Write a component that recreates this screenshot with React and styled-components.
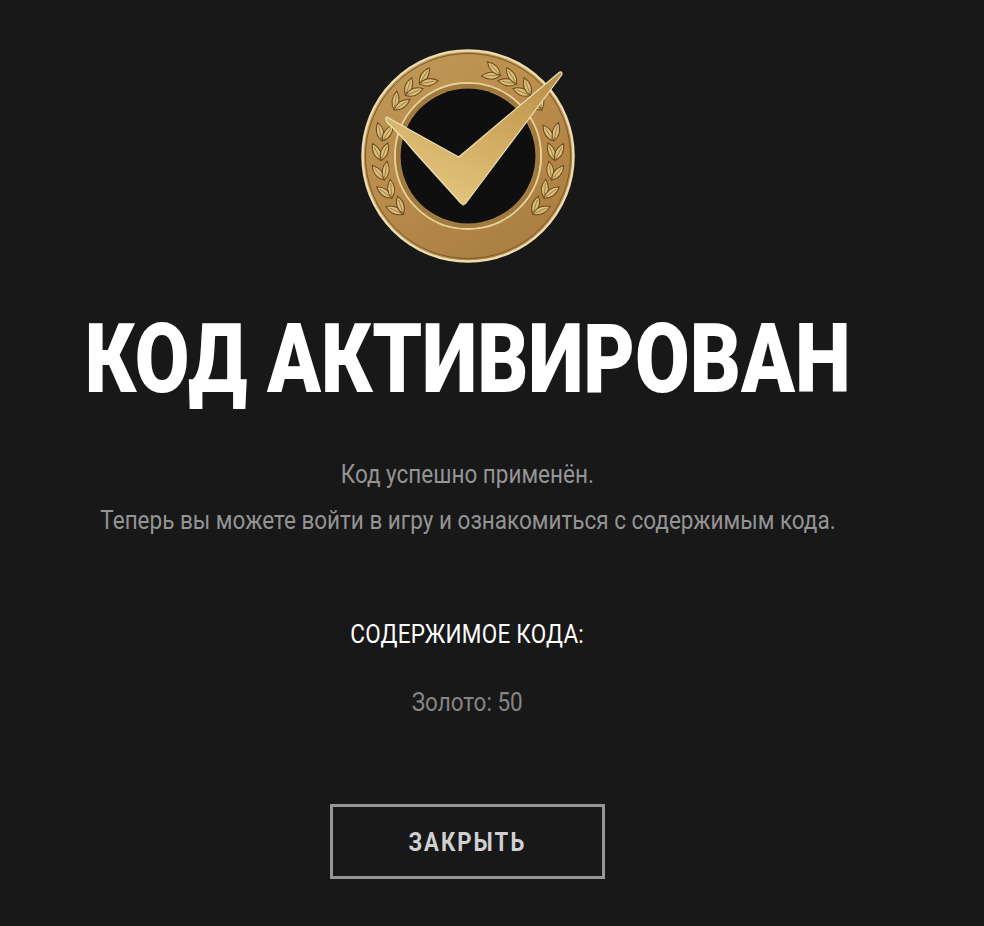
import React from "react";
import styled, { createGlobalStyle } from "styled-components";

const GlobalStyle = createGlobalStyle`
  html, body {
    margin: 0;
    background: #181818;
  }
  body {
    font-family: "Roboto", "Liberation Sans", sans-serif;
  }
`;

const Page = styled.div`
  width: 935px;
  height: 926px;
  display: flex;
  flex-direction: column;
  align-items: center;
  overflow: hidden;
`;

const Emblem = styled.svg`
  display: block;
  width: 250px;
  height: 240px;
  margin-top: 40px;
  flex: none;
`;

const Title = styled.h1`
  margin: 23px 0 0;
  font-size: 96px;
  line-height: 112px;
  font-weight: 900;
  color: #fff;
  white-space: nowrap;
  transform: scaleX(0.826);
`;

const Text = styled.p`
  margin: ${(p) => p.$top}px 0 0;
  font-size: 26px;
  line-height: 30px;
  color: ${(p) => p.$color || "#949494"};
  letter-spacing: ${(p) => p.$spacing || 0}px;
  white-space: nowrap;
  transform: scaleX(0.865);
`;

const CloseButton = styled.button`
  box-sizing: border-box;
  width: 275px;
  height: 75px;
  margin-top: 87px;
  padding: 0;
  border: 3px solid #969696;
  background: transparent;
  color: #d0d0d0;
  font-family: inherit;
  font-size: 26px;
  font-weight: 700;
  letter-spacing: 2.4px;
  text-transform: uppercase;
`;

const Label = styled.span`
  display: inline-block;
  transform: scaleX(0.85);
`;

// ring angles (deg, clockwise from +x) of the leaf pairs, dir is where the branch grows
const branches = [
  { from: 138, to: 192, step: 13, dir: 1 },
  { from: 212, to: 246, step: 12, dir: 1 },
  { from: 42, to: -10, step: -13, dir: -1 },
  { from: -32, to: -68, step: -12, dir: -1 },
];

function leafPairs() {
  const out = [];
  branches.forEach((b) => {
    for (let a = b.from; b.dir > 0 ? a <= b.to : a >= b.to; a += b.step) {
      out.push({ a, dir: b.dir });
    }
  });
  return out;
}

function Medal() {
  return (
    <Emblem viewBox="2.3 0 250 240">
      <defs>
        <linearGradient id="ring" x1="0" y1="0" x2="0.6" y2="1">
          <stop offset="0" stopColor="#c09a58" />
          <stop offset="0.55" stopColor="#b98c4c" />
          <stop offset="1" stopColor="#ab7f42" />
        </linearGradient>
        <linearGradient id="tick" x1="0.9" y1="0" x2="0.3" y2="1">
          <stop offset="0" stopColor="#b99049" />
          <stop offset="0.45" stopColor="#d0a95f" />
          <stop offset="1" stopColor="#e3c77f" />
        </linearGradient>
      </defs>
      <circle cx="127.3" cy="116" r="105.5" fill="url(#ring)" stroke="#ecdcae" strokeWidth="2.5" />
      <circle cx="127.3" cy="116" r="102.5" fill="none" stroke="#7e5a29" strokeWidth="1" />
      <g transform="translate(127.3 116)">
        {leafPairs().map(({ a, dir }, i) => (
          <g key={i} transform={`rotate(${a}) translate(87 0) rotate(${dir > 0 ? 180 : 0})`}>
            {[-24, 24].map((r) => (
              <g key={r} transform={`rotate(${r})`}>
                <path d="M0 0 Q7 -9 0 -19 Q-7 -9 0 0 Z" fill="#dcbd7a" stroke="#6a4a20" strokeWidth="1" />
                <path d="M0 -2 L0 -15" stroke="#8a6a33" strokeWidth="0.7" />
              </g>
            ))}
          </g>
        ))}
      </g>
      <circle cx="127.3" cy="116" r="73" fill="none" stroke="#e8d198" strokeWidth="2" />
      <circle cx="127.3" cy="116" r="70" fill="none" stroke="#a07a3e" strokeWidth="4" />
      <circle cx="127.3" cy="116" r="67.5" fill="#0f0f0f" />
      <path
        d="M46 77 L118 117 L219 32 Q222 31 221 35 L126 162 Q123 167 120 163 L74 112 Q60 95 47 83 Q44 79 46 77 Z"
        fill="url(#tick)"
        stroke="#efe0b6"
        strokeWidth="1.2"
        strokeLinejoin="round"
      />
    </Emblem>
  );
}

export default function App() {
  return (
    <>
      <GlobalStyle />
      <Page>
        <Medal />
        <Title>КОД АКТИВИРОВАН</Title>
        <Text $top={44}>Код успешно применён.</Text>
        <Text $top={16}>Теперь вы можете войти в игру и ознакомиться с содержимым кода.</Text>
        <Text $top={84} $color="#fff" $spacing={0.3}>СОДЕРЖИМОЕ КОДА:</Text>
        <Text $top={38} $color="#858585">Золото: 50</Text>
        <CloseButton><Label>Закрыть</Label></CloseButton>
      </Page>
    </>
  );
}
